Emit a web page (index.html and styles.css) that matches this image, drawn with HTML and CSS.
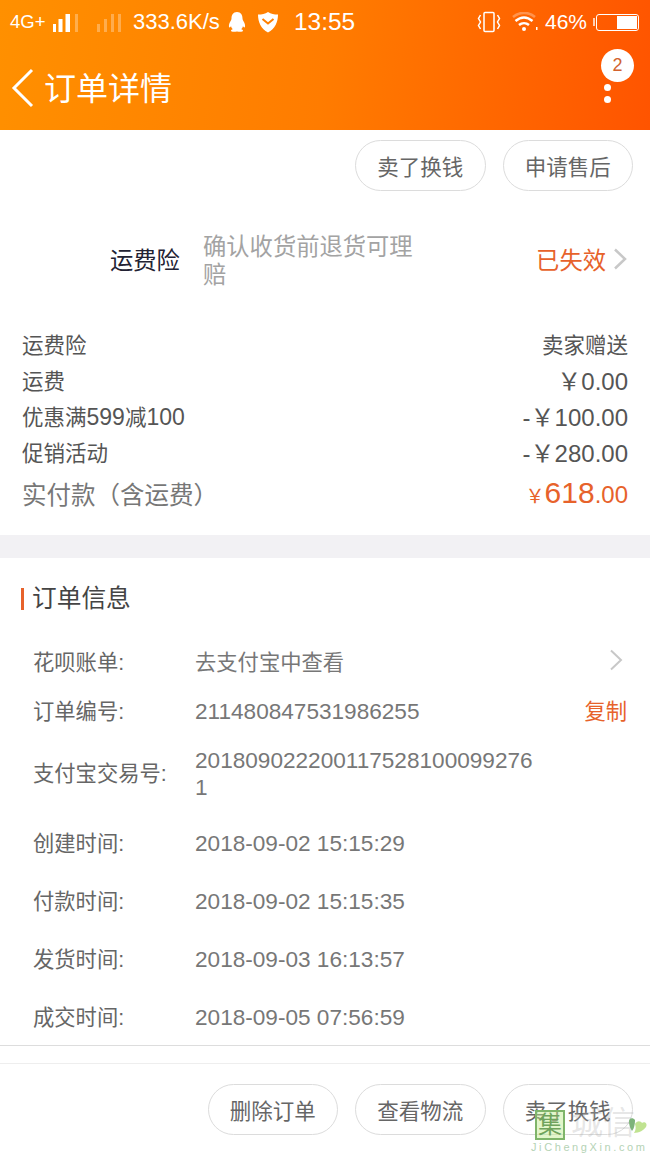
FILE: index.html
```html
<!DOCTYPE html>
<html lang="zh-CN">
<head>
<meta charset="utf-8">
<title>订单详情</title>
<link rel="stylesheet" href="styles.css">
</head>
<body>
<div class="page">
  <header class="header">
    <div class="status">
      <div class="status-left">
        <span class="net">4G+</span>
        <svg class="sig" width="28" height="20" viewBox="0 0 28 20"><rect x="1" y="11" width="3" height="8" fill="#fff"/><rect x="6.500" y="6" width="4" height="13" fill="#fff"/><rect x="13.500" y="1" width="4.500" height="18" fill="#fff"/><rect x="23" y="1" width="3" height="18" fill="#fff" opacity=".3"/></svg>
        <svg class="sig2" width="28" height="20" viewBox="0 0 28 20"><rect x="1" y="11" width="3" height="8" fill="#fff" opacity=".3"/><rect x="8" y="6" width="3" height="13" fill="#fff" opacity=".3"/><rect x="15" y="1" width="3" height="18" fill="#fff" opacity=".3"/><rect x="22" y="1" width="3" height="18" fill="#fff" opacity=".3"/></svg>
        <span class="speed">333.6K/s</span>
        <svg class="qq" width="18" height="20" viewBox="0 0 18 20"><path d="M9 0C5 0 3.500 3 3.500 6.500C3.500 8 2 9.500 1.200 12C.6 14 1 15.500 1.600 15.500C2.200 15.500 2.800 14.500 3 14C3.300 15.500 4 16.500 4.800 17.200C3.500 17.600 2.800 18.300 3 19C3.300 20 6.500 20 9 19.400C11.500 20 14.700 20 15 19C15.200 18.300 14.500 17.600 13.200 17.200C14 16.500 14.700 15.500 15 14C15.200 14.500 15.800 15.500 16.400 15.500C17 15.500 17.400 14 16.800 12C16 9.500 14.500 8 14.500 6.500C14.500 3 13 0 9 0Z" fill="#fff"/></svg>
        <svg class="shield" width="22" height="22" viewBox="0 0 22 22"><path d="M11 1C14 3 17 3.500 21 3.500C21 11 18 18 11 21.500C4 18 1 11 1 3.500C5 3.500 8 3 11 1Z" fill="#fff"/><path d="M5.500 8L11 12.500L16.500 8" fill="none" stroke="#ff8000" stroke-width="2"/></svg>
        <span class="time">13:55</span>
      </div>
      <div class="status-right">
        <svg class="vib" width="24" height="22" viewBox="0 0 24 22" fill="none" stroke="#fff" stroke-width="1.500"><rect x="7" y="1.500" width="10" height="19" rx="1"/><path d="M3.500 4L1.500 7.500L3.500 11L1.500 14.500L3.500 18M20.500 4L22.500 7.500L20.500 11L22.500 14.500L20.500 18"/></svg>
        <svg class="wifi" width="26" height="20" viewBox="0 0 26 20" fill="none" stroke="#fff" stroke-width="2.500"><path d="M1 5C7 -.5 17 -.5 23 5" opacity=".3"/><path d="M3.500 9C9 4.500 15 4.500 20.500 9"/><path d="M7 13C10 10.500 14 10.500 17 13"/><circle cx="12" cy="17" r="2" fill="#fff" stroke="none"/><rect x="24" y="15" width="1.500" height="3" fill="#fff" stroke="none"/></svg>
        <span class="pct">46%</span>
        <div class="battery"><div class="battery-fill"></div></div>
      </div>
    </div>
    <div class="nav">
      <svg class="back" width="24" height="40" viewBox="0 0 24 40" fill="none" stroke="#fff" stroke-width="3"><path d="M21 2L3 20L21 38"/></svg>
      <h1 class="nav-title">订单详情</h1>
      <div class="more">
        <span class="badge">2</span>
        <span class="dot"></span>
        <span class="dot"></span>
      </div>
    </div>
  </header>

  <div class="actions actions-top">
    <button class="pill">卖了换钱</button>
    <button class="pill">申请售后</button>
  </div>

  <section class="insure">
    <span class="insure-name">运费险</span>
    <span class="insure-desc">确认收货前退货可理赔</span>
    <span class="insure-state">已失效</span>
    <svg class="chev" width="14" height="22" viewBox="0 0 14 22" fill="none" stroke="#c8c8c8" stroke-width="2.500"><path d="M2 1.500L12 11L2 20.500"/></svg>
  </section>

  <section class="fees">
    <div class="fee"><span>运费险</span><span>卖家赠送</span></div>
    <div class="fee"><span>运费</span><span class="amount">￥0.00</span></div>
    <div class="fee"><span>优惠满<span class="num">599</span>减<span class="num">100</span></span><span class="amount">-￥100.00</span></div>
    <div class="fee"><span>促销活动</span><span class="amount">-￥280.00</span></div>
    <div class="total">
      <span class="total-label">实付款（含运费）</span>
      <span class="total-price"><small class="yen">￥</small>618<small class="cents">.00</small></span>
    </div>
  </section>

  <div class="gap"></div>

  <section class="info">
    <h2 class="info-title">订单信息</h2>
    <div class="row row-a">
      <span class="key">花呗账单:</span><span class="val">去支付宝中查看</span>
      <svg class="chev chev-info" width="14" height="22" viewBox="0 0 14 22" fill="none" stroke="#c8c8c8" stroke-width="2"><path d="M2 1.500L12 11L2 20.500"/></svg>
    </div>
    <div class="row row-b">
      <span class="key">订单编号:</span><span class="val val-num">211480847531986255</span>
      <span class="copy">复制</span>
    </div>
    <div class="row row-c">
      <span class="key">支付宝交易号:</span><span class="val val-num val-wrap">2018090222001175281000992761</span>
    </div>
    <div class="row row-d"><span class="key">创建时间:</span><span class="val val-num">2018-09-02 15:15:29</span></div>
    <div class="row row-d"><span class="key">付款时间:</span><span class="val val-num">2018-09-02 15:15:35</span></div>
    <div class="row row-d"><span class="key">发货时间:</span><span class="val val-num">2018-09-03 16:13:57</span></div>
    <div class="row row-d"><span class="key">成交时间:</span><span class="val val-num">2018-09-05 07:56:59</span></div>
  </section>

  <div class="spacer"></div>

  <footer class="actions actions-bottom">
    <button class="pill">删除订单</button>
    <button class="pill">查看物流</button>
    <button class="pill">卖了换钱</button>
  </footer>

  <div class="watermark">
    <span class="wm-box">集</span>
    <span class="wm-text">城信</span>
    <svg class="wm-heart" width="20" height="16" viewBox="0 0 20 16"><path d="M1 3C1 0 5 -1 7 2C7 6 6 11 4 13C2 10 1 7 1 3Z" fill="#7db37a"/><path d="M7 6C9 2 13 3 14 5C16 3 20 5 18 9C16 12 11 15 6 15C8 12 8 9 7 6Z" fill="#b5de7e" opacity=".85"/></svg>
    <span class="wm-url">JiChengXin.com</span>
  </div>
</div>
</body>
</html>
```
FILE: styles.css
```css
* { box-sizing: border-box; margin: 0; padding: 0; }
html, body { background: #fff; }
body {
  width: 650px;
  height: 1155px;
  overflow: hidden;
  font-family: "Liberation Sans", "Noto Sans CJK SC", sans-serif;
  color: #555;
}
.page { position: relative; width: 650px; height: 1155px; overflow: hidden; background: #fff; }

.header {
  height: 130px;
  background: linear-gradient(97deg, #ff9000 0%, #ff7c00 50%, #ff5400 100%);
  color: #fff;
}
.status {
  height: 44px;
  padding: 0 11px 0 10px;
  display: flex;
  align-items: center;
  justify-content: space-between;
}
.status-left, .status-right { display: flex; align-items: center; }
.net { font-size: 18.500px; width: 42px; }
.sig { margin-right: 16px; margin-top: 1px; }
.sig2 { margin-right: 9px; margin-top: 1px; }
.speed { font-size: 22px; width: 87px; margin-right: 8px; white-space: nowrap; }
.qq { margin-right: 11px; }
.shield { margin-right: 15px; }
.time { font-size: 24.400px; }
.vib { margin-right: 11px; }
.wifi { margin-right: 7px; }
.pct { font-size: 21px; margin-right: 9px; }
.battery {
  position: relative;
  width: 43px; height: 17px;
  border: 1.500px solid #fff;
  border-radius: 3px;
  padding: 1px;
  display: flex;
  justify-content: flex-end;
}
.battery::before {
  content: "";
  position: absolute;
  left: -4px; top: 3px;
  width: 2px; height: 8px;
  background: rgba(255, 255, 255, .7);
}
.battery-fill { width: 20px; background: #fff; }

.nav {
  position: relative;
  height: 86px;
  display: flex;
  align-items: center;
  padding-left: 11px;
}
.back { flex: none; margin-top: 2px; }
.nav-title { font-size: 32px; font-weight: 400; margin-left: 9px; margin-top: 3px; line-height: 44px; }
.more {
  position: absolute;
  right: 16px;
  top: 5px;
  width: 33px;
  display: flex;
  flex-direction: column;
  align-items: center;
}
.badge {
  width: 33px; height: 33px;
  border-radius: 50%;
  background: #fff;
  color: #d2622e;
  font-size: 18px;
  line-height: 33px;
  text-align: center;
  margin-bottom: -3px;
}
.dot { width: 7px; height: 7px; border-radius: 50%; background: #fff; margin-top: 5px; margin-right: 21px; }

.actions { display: flex; justify-content: flex-end; gap: 17px; padding-right: 17px; }
.actions-top { padding-top: 10px; height: 61px; }
.pill {
  width: 130.500px;
  height: 51px;
  border: 1px solid #dcdcdc;
  border-radius: 26px;
  background: #fff;
  color: #666;
  font-family: inherit;
  font-size: 21.500px;
}

.insure {
  height: 123px;
  margin-top: 11px;
  padding-bottom: 10px;
  display: flex;
  align-items: center;
  padding-left: 110px;
  padding-right: 23px;
}
.insure-name { font-size: 23.300px; color: #223; width: 93px; flex: none; }
.insure-desc { font-size: 23.300px; color: #a3a3a3; width: 212px; line-height: 28px; flex: none; margin-top: 4px; }
.insure-state { font-size: 23.300px; color: #e7622b; margin-left: auto; }
.chev { flex: none; }
.insure .chev { margin-left: 7px; }

.fees { padding: 0 22px; }
.fee {
  height: 36px;
  display: flex;
  align-items: center;
  justify-content: space-between;
  font-size: 21.500px;
  color: #555;
}
.num { font-size: 23px; }
.amount { font-size: 24px; line-height: 30px; padding-top: 6px; }
.total {
  height: 48px;
  display: flex;
  align-items: center;
  justify-content: space-between;
}
.total-label { font-size: 24.500px; color: #777; text-spacing-trim: space-all; }
.total-price { font-size: 30px; color: #e7622b; }
.yen { font-size: 19px; }
.cents { font-size: 24px; }

.gap { height: 23px; margin-top: 18px; background: #f2f1f4; }

.info { padding-top: 30px; }
.info-title {
  font-size: 24.700px;
  font-weight: 400;
  color: #444;
  margin-left: 21px;
  padding-left: 8px;
  height: 22px;
  line-height: 22px;
  border-left: 3px solid #e7622b;
}
.row { display: flex; align-items: center; padding-left: 33px; padding-right: 23px; font-size: 21.300px; }
.key { width: 162px; flex: none; color: #666; }
.val { color: #777; }
.val-num { font-size: 22.600px; padding-top: 6px; }
.val-wrap { width: 345px; line-height: 27px; word-break: break-all; }
.row-a { height: 48px; margin-top: 26px; }
.row-b { height: 50px; }
.row-c { height: 74px; margin-bottom: 4px; }
.row-d { height: 58px; }
.chev-info { margin-left: auto; margin-right: 4px; }
.copy { margin-left: auto; color: #e7622b; }

.spacer { height: 19px; margin-top: 1px; border-top: 1px solid #ddd; border-bottom: 1px solid #eee; }
.actions-bottom { padding-top: 20px; }

.watermark { position: absolute; left: 533px; top: 1108px; width: 117px; height: 47px; }
.wm-box {
  position: absolute; left: 2px; top: 2px;
  width: 30px; height: 30px;
  background: rgba(190, 235, 140, .45);
  border: 2px solid #7fb56a;
  color: #6fa35c;
  font-size: 24px;
  line-height: 26px;
  text-align: center;
}
.wm-text { position: absolute; left: 38px; top: -3px; font-size: 32px; line-height: 36px; color: rgba(170, 170, 170, .3); }
.wm-heart { position: absolute; left: 95px; top: 10px; }
.wm-url { position: absolute; left: -2px; top: 33px; font-size: 11px; line-height: 13px; letter-spacing: 2.600px; color: #b5d3b5; white-space: nowrap; }
```
